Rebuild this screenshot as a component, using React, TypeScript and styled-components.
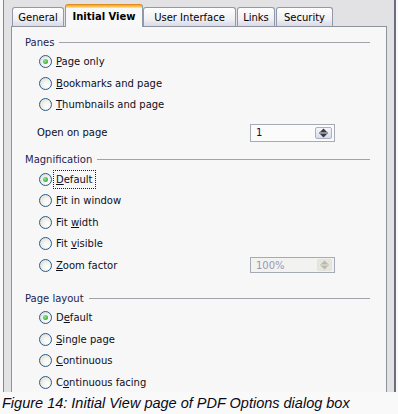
import React from "react";
import styled, { createGlobalStyle } from "styled-components";

type Option = { text: string; key: number; checked?: boolean; focus?: boolean };

const panes: Option[] = [
  { text: "Page only", key: 0, checked: true },
  { text: "Bookmarks and page", key: 0 },
  { text: "Thumbnails and page", key: 0 },
];

const magnification: Option[] = [
  { text: "Default", key: 0, checked: true, focus: true },
  { text: "Fit in window", key: 0 },
  { text: "Fit width", key: 4 },
  { text: "Fit visible", key: 4 },
  { text: "Zoom factor", key: 0 },
];

const layout: Option[] = [
  { text: "Default", key: 1, checked: true },
  { text: "Single page", key: 0 },
  { text: "Continuous", key: 0 },
  { text: "Continuous facing", key: 1 },
];

const tabs = [
  { name: "General", width: 52 },
  { name: "Initial View", width: 78, active: true },
  { name: "User Interface", width: 93 },
  { name: "Links", width: 38 },
  { name: "Security", width: 57 },
];

const Mnemonic: React.FC<{ text: string; at: number }> = ({ text, at }) => (
  <>
    {text.slice(0, at)}
    <Key>{text[at]}</Key>
    {text.slice(at + 1)}
  </>
);

const SpinIcon: React.FC<{ color: string }> = ({ color }) => (
  <svg width="9" height="10" viewBox="0 0 9 10">
    <polygon points="4.5,0.5 8,4 1,4" fill={color} />
    <polygon points="1,6 8,6 4.5,9.5" fill={color} />
    <rect x="0" y="4.5" width="9" height="1" fill={color} />
  </svg>
);

const Spin: React.FC<{ value: string; disabled?: boolean }> = ({ value, disabled }) => (
  <SpinField $disabled={disabled}>
    <span>{value}</span>
    <SpinButton $disabled={disabled}>
      <SpinIcon color={disabled ? "#b9b9b0" : "#3a3a44"} />
    </SpinButton>
  </SpinField>
);

const RadioList: React.FC<{ items: Option[]; extra?: React.ReactNode }> = ({ items, extra }) => (
  <>
    {items.map((o, i) => (
      <RadioRow key={o.text}>
        <RadioCircle $checked={o.checked} />
        <Label $focus={o.focus}>
          <Mnemonic text={o.text} at={o.key} />
        </Label>
        {i === items.length - 1 && extra}
      </RadioRow>
    ))}
  </>
);

export default function App() {
  return (
    <Page>
      <GlobalStyle />
      <Dialog>
        <TabBar>
          {tabs.map((t) => (
            <Tab key={t.name} $w={t.width} $active={t.active}>
              {t.name}
            </Tab>
          ))}
        </TabBar>
        <Panel>
          <Heading>
            Panes
            <Rule />
          </Heading>
          <RadioList items={panes} />
          <FieldRow>
            Open on page
            <Spin value="1" />
          </FieldRow>

          <Heading $top={9}>
            Magnification
            <Rule />
          </Heading>
          <RadioList items={magnification} extra={<Spin value="100%" disabled />} />

          <Heading $top={13}>
            Page layout
            <Rule />
          </Heading>
          <RadioList items={layout} />
        </Panel>
      </Dialog>
      <Caption>Figure 14: Initial View page of PDF Options dialog box</Caption>
    </Page>
  );
}

const GlobalStyle = createGlobalStyle`
  html, body {
    margin: 0;
    padding: 0;
    background: #f9f9f9;
  }
  body {
    width: 398px;
    height: 414px;
    overflow: hidden;
    font-family: "DejaVu Sans", sans-serif;
    font-size: 10px;
  }
`;

const Page = styled.div`
  width: 398px;
  height: 414px;
  display: flex;
  flex-direction: column;
`;

const Dialog = styled.div`
  margin-left: 3px;
  width: 393px;
  height: 392px;
  box-sizing: border-box;
  background: #e2e2e4;
  border-left: 1px solid #85858f;
  border-right: 2px solid #6c6c7c;
  padding-left: 7px;
  display: flex;
  flex-direction: column;
  overflow: hidden;
`;

const TabBar = styled.div`
  height: 26px;
  flex-shrink: 0;
  display: flex;
  align-items: flex-end;
  padding-left: 1px;
  position: relative;
  z-index: 2;
`;

const Tab = styled.div<{ $w: number; $active?: boolean }>`
  width: ${(p) => p.$w}px;
  height: ${(p) => (p.$active ? 23 : 19)}px;
  margin-bottom: ${(p) => (p.$active ? -1 : 0)}px;
  margin-right: ${(p) => (p.$active ? 0 : 1)}px;
  box-sizing: border-box;
  border: 1px solid #9199a8;
  border-bottom: none;
  border-radius: 3px 3px 0 0;
  display: flex;
  justify-content: center;
  align-items: center;
  padding-top: ${(p) => (p.$active ? 1 : 0)}px;
  color: #000;
  font-weight: ${(p) => (p.$active ? "bold" : "normal")};
  white-space: nowrap;
  background: ${(p) =>
    p.$active
      ? "linear-gradient(#e89a2e 0, #fbc24e 1px, #fbc24e 2px, #f8f8f8 3px, #f8f8f8 100%)"
      : "linear-gradient(#fefefe, #f1f1f5 60%, #d9d9ea)"};
  border-top-color: ${(p) => (p.$active ? "#e08a24" : "#9199a8")};
`;

const Panel = styled.div`
  width: 376px;
  flex: 1;
  box-sizing: border-box;
  background: #f7f7f7;
  border: 1px solid #8e949c;
  border-bottom: none;
  padding: 6px 16px 0 13px;
  display: flex;
  flex-direction: column;
`;

const Heading = styled.div<{ $top?: number }>`
  height: 18px;
  margin-top: ${(p) => p.$top ?? 0}px;
  display: flex;
  align-items: center;
  gap: 5px;
  color: #1c2452;
`;

const Rule = styled.div`
  flex: 1;
  height: 1px;
  background: #a2a2aa;
`;

const RadioRow = styled.div`
  height: 21.5px;
  display: flex;
  align-items: center;
  gap: 4px;
  padding-left: 14px;
  color: #0e0e22;
`;

const FieldRow = styled.div`
  height: 18px;
  margin-top: 8px;
  display: flex;
  align-items: center;
  padding-left: 12px;
  color: #0e0e22;
`;

const RadioCircle = styled.span<{ $checked?: boolean }>`
  width: 13px;
  height: 13px;
  box-sizing: border-box;
  border-radius: 50%;
  border: 1px solid #2c5a84;
  background: radial-gradient(circle at 65% 65%, #ffffff 0%, #f1f1ec 45%, #d6d6cf 100%);
  display: flex;
  align-items: center;
  justify-content: center;
  flex-shrink: 0;

  &::after {
    content: "";
    width: 5px;
    height: 5px;
    border-radius: 50%;
    background: radial-gradient(circle at 35% 35%, #8ee68e, #1c9c1c);
    display: ${(p) => (p.$checked ? "block" : "none")};
  }
`;

const Label = styled.span<{ $focus?: boolean }>`
  white-space: nowrap;
  line-height: 13px;
  outline: ${(p) => (p.$focus ? "1px dotted #222" : "none")};
  outline-offset: 2px;
`;

const Key = styled.span`
  text-decoration: underline;
`;

const SpinField = styled.div<{ $disabled?: boolean }>`
  margin-left: auto;
  margin-right: 35px;
  width: 85px;
  height: ${(p) => (p.$disabled ? 16 : 18)}px;
  box-sizing: border-box;
  border: 1px solid #a5abb4;
  background: ${(p) => (p.$disabled ? "#f2f2f0" : "#fbfbfb")};
  color: ${(p) => (p.$disabled ? "#9b97b6" : "#101040")};
  display: flex;
  align-items: center;
  justify-content: space-between;
  padding: 0 2px 0 5px;
`;

const SpinButton = styled.span<{ $disabled?: boolean }>`
  width: ${(p) => (p.$disabled ? 15 : 17)}px;
  height: 12px;
  box-sizing: border-box;
  border: 1px solid ${(p) => (p.$disabled ? "#e2e2da" : "#aab2c2")};
  border-radius: 2px;
  background: ${(p) =>
    p.$disabled ? "#e6e6de" : "linear-gradient(#f6f6fa, #d9dce8)"};
  display: flex;
  align-items: center;
  justify-content: center;
`;

const Caption = styled.div`
  height: 22px;
  line-height: 22px;
  padding-left: 2px;
  font-family: "Liberation Sans", Arial, sans-serif;
  font-style: italic;
  font-size: 14.5px;
  color: #0a0a16;
  white-space: nowrap;
`;
